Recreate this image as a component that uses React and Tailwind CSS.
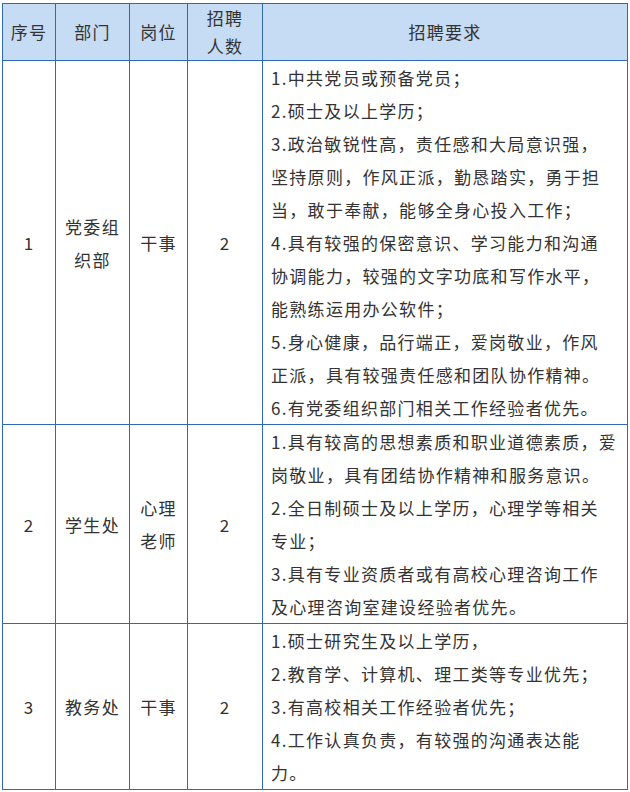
const rows = [
  {
    no: "1",
    dept: ["党委组", "织部"],
    post: ["干事"],
    count: "2",
    h: "h-[364px]",
    req: [
      "1.中共党员或预备党员；",
      "2.硕士及以上学历；",
      "3.政治敏锐性高，责任感和大局意识强，",
      "坚持原则，作风正派，勤恳踏实，勇于担",
      "当，敢于奉献，能够全身心投入工作；",
      "4.具有较强的保密意识、学习能力和沟通",
      "协调能力，较强的文字功底和写作水平，",
      "能熟练运用办公软件；",
      "5.身心健康，品行端正，爱岗敬业，作风",
      "正派，具有较强责任感和团队协作精神。",
      "6.有党委组织部门相关工作经验者优先。",
    ],
  },
  {
    no: "2",
    dept: ["学生处"],
    post: ["心理", "老师"],
    count: "2",
    h: "h-[199px]",
    req: [
      "1.具有较高的思想素质和职业道德素质，爱",
      "岗敬业，具有团结协作精神和服务意识。",
      "2.全日制硕士及以上学历，心理学等相关",
      "专业；",
      "3.具有专业资质者或有高校心理咨询工作",
      "及心理咨询室建设经验者优先。",
    ],
  },
  {
    no: "3",
    dept: ["教务处"],
    post: ["干事"],
    count: "2",
    h: "h-[166px]",
    req: [
      "1.硕士研究生及以上学历，",
      "2.教育学、计算机、理工类等专业优先；",
      "3.有高校相关工作经验者优先；",
      "4.工作认真负责，有较强的沟通表达能",
      "力。",
    ],
  },
];

const cell = "border border-[#2f6bb5] text-center align-middle p-0";

export default function App() {
  return (
    <div className="w-[630px] h-[792px] bg-white pt-[3px] pl-[2px] text-[#333] text-[17px] tracking-[1.3px] font-['Noto_Sans_CJK_SC','Noto_Sans',sans-serif]">
      <table className="w-[625px] table-fixed border-collapse">
        <colgroup>
          <col className="w-[53px]" />
          <col className="w-[74px]" />
          <col className="w-[58px]" />
          <col className="w-[75px]" />
          <col className="w-[365px]" />
        </colgroup>
        <thead>
          <tr className="h-[57px] bg-[#c6dbf4] leading-[28px]">
            <th className={`${cell} font-normal`}>序号</th>
            <th className={`${cell} font-normal`}>部门</th>
            <th className={`${cell} font-normal`}>岗位</th>
            <th className={`${cell} font-normal`}>
              <div>招聘</div>
              <div>人数</div>
            </th>
            <th className={`${cell} font-normal`}>招聘要求</th>
          </tr>
        </thead>
        <tbody>
          {rows.map((r) => (
            <tr key={r.no} className={`${r.h} leading-[33px]`}>
              <td className={cell}>{r.no}</td>
              <td className={cell}>
                {r.dept.map((l) => (
                  <div key={l}>{l}</div>
                ))}
              </td>
              <td className={cell}>
                {r.post.map((l) => (
                  <div key={l}>{l}</div>
                ))}
              </td>
              <td className={cell}>{r.count}</td>
              <td className={`${cell} text-left pl-[8px]`}>
                {r.req.map((l) => (
                  <div key={l} className="whitespace-nowrap">
                    {l}
                  </div>
                ))}
              </td>
            </tr>
          ))}
        </tbody>
      </table>
    </div>
  );
}
